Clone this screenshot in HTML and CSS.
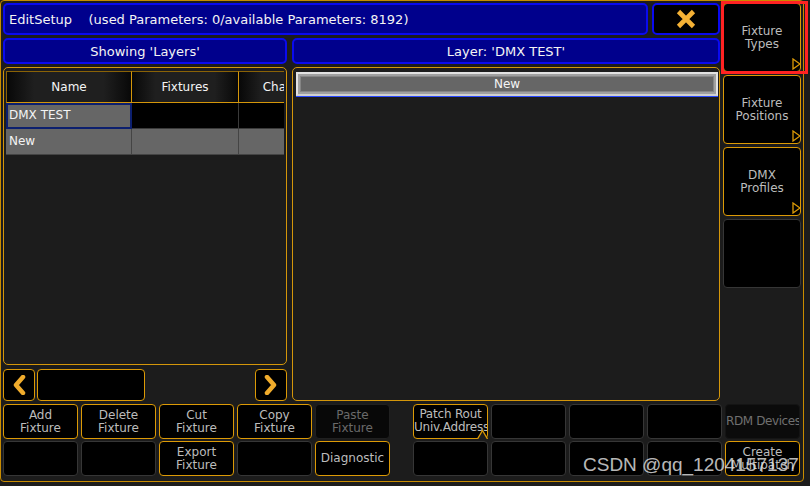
FILE: index.html
```html
<!DOCTYPE html>
<html>
<head>
<meta charset="utf-8">
<title>EditSetup</title>
<link rel="stylesheet" href="styles.css">
</head>
<body>
<div class="app">
  <div class="top">
    <div class="main">
      <div class="titlerow">
        <div class="title">EditSetup    (used Parameters: 0/available Parameters: 8192)</div>
        <div class="close">
          <svg width="22" height="20" viewBox="0 0 22 20"><path d="M3.5 2.5 L18.5 17.5 M18.5 2.5 L3.5 17.5" stroke="#f4b135" stroke-width="4.6" fill="none"/></svg>
        </div>
      </div>
      <div class="subrow">
        <div class="sub sub-left">Showing 'Layers'</div>
        <div class="sub sub-right">Layer: 'DMX TEST'</div>
      </div>
      <div class="panels">
        <div class="leftcol">
          <div class="panel table-panel">
            <div class="table">
              <div class="trow thead">
                <div class="th">Name</div>
                <div class="th">Fixtures</div>
                <div class="th">Channels</div>
              </div>
              <div class="trow">
                <div class="td sel">DMX TEST</div>
                <div class="td black"></div>
                <div class="td black"></div>
              </div>
              <div class="trow">
                <div class="td">New</div>
                <div class="td"></div>
                <div class="td"></div>
              </div>
            </div>
          </div>
          <div class="scrollrow">
            <div class="btn arrow">
              <svg width="14" height="20" viewBox="0 0 14 20"><polyline points="11,2 4,10 11,18" stroke="#f0ac2c" stroke-width="4.5" fill="none" stroke-linejoin="round" stroke-linecap="round"/></svg>
            </div>
            <div class="btn scrollbox"></div>
            <div class="spacer"></div>
            <div class="btn arrow">
              <svg width="14" height="20" viewBox="0 0 14 20"><polyline points="3,2 10,10 3,18" stroke="#f0ac2c" stroke-width="4.5" fill="none" stroke-linejoin="round" stroke-linecap="round"/></svg>
            </div>
          </div>
        </div>
        <div class="panel layer-panel">
          <div class="newbar">New</div>
        </div>
      </div>
    </div>
    <div class="side">
      <div class="btn side-btn">Fixture<br>Types
        <svg class="tri" width="9" height="12" viewBox="0 0 9 12"><polygon points="1,1 8,6 1,11" stroke="#dc9a06" stroke-width="1.3" fill="#000"/></svg>
        <div class="selframe"></div>
      </div>
      <div class="btn side-btn">Fixture<br>Positions
        <svg class="tri" width="9" height="12" viewBox="0 0 9 12"><polygon points="1,1 8,6 1,11" stroke="#dc9a06" stroke-width="1.3" fill="#000"/></svg>
      </div>
      <div class="btn side-btn">DMX<br>Profiles
        <svg class="tri" width="9" height="12" viewBox="0 0 9 12"><polygon points="1,1 8,6 1,11" stroke="#dc9a06" stroke-width="1.3" fill="#000"/></svg>
      </div>
      <div class="btn side-btn dim"></div>
    </div>
  </div>
  <div class="buttons">
    <div class="btn">Add<br>Fixture</div>
    <div class="btn">Delete<br>Fixture</div>
    <div class="btn">Cut<br>Fixture</div>
    <div class="btn">Copy<br>Fixture</div>
    <div class="btn paste">Paste<br>Fixture</div>
    <div class="gapcell"></div>
    <div class="btn patch"><span class="clip">Patch Rout<br>Univ.Address</span>
      <svg class="notch" width="11" height="10" viewBox="0 0 11 10"><polyline points="0.5,10 5.5,1.5 10.5,10" stroke="#dc9a06" stroke-width="1.3" fill="#1c1c1c"/></svg>
    </div>
    <div class="btn dim"></div>
    <div class="btn dim"></div>
    <div class="btn dim"></div>
    <div class="btn rdm"><span class="clip">RDM Devices</span></div>

    <div class="btn dim"></div>
    <div class="btn dim"></div>
    <div class="btn">Export<br>Fixture</div>
    <div class="btn dim"></div>
    <div class="btn">Diagnostic</div>
    <div class="gapcell"></div>
    <div class="btn dim"></div>
    <div class="btn dim"></div>
    <div class="btn dim"></div>
    <div class="btn dim"></div>
    <div class="btn">Create<br>Multipatch</div>
  </div>
</div>
<div class="watermark">CSDN @qq_1204157137</div>
</body>
</html>
```

FILE: styles.css
```css
* { box-sizing: border-box; margin: 0; padding: 0; }

body {
  background: #1c1c1c;
  font-family: "DejaVu Sans", sans-serif;
  font-size: 12px;
  color: #bcbcbc;
  width: 810px;
  height: 486px;
  overflow: hidden;
  position: relative;
}

.app {
  width: 804px;
  height: 482px;
  border: 1px solid #c98c00;
  border-radius: 4px;
  padding: 2px 2px 4px 2px;
  display: flex;
  flex-direction: column;
}

.top { display: flex; gap: 3px; height: 398px; }

.main { width: 717px; display: flex; flex-direction: column; gap: 3px; }

.titlerow { display: flex; gap: 4px; height: 32px; }

.title {
  flex: 1;
  background: #00008c;
  border: 2px solid #0a0af0;
  border-radius: 5px;
  color: #f4f4f4;
  font-size: 13px;
  display: flex;
  align-items: center;
  padding-left: 4px;
  white-space: pre;
}

.close {
  width: 68px;
  background: #000;
  border: 2px solid #0a0af0;
  border-radius: 5px;
  display: flex;
  align-items: center;
  justify-content: center;
}

.subrow { display: flex; gap: 5px; height: 26px; }

.sub {
  background: #00008c;
  border: 2px solid #0a0af0;
  border-radius: 5px;
  color: #f4f4f4;
  font-size: 13px;
  display: flex;
  align-items: center;
  justify-content: center;
}
.sub-left { width: 284px; }
.sub-right { flex: 1; }

.panels { display: flex; gap: 5px; height: 334px; }

.leftcol { width: 284px; display: flex; flex-direction: column; gap: 4px; }

.panel {
  border: 1px solid #d4960a;
  border-radius: 5px;
  background: #1c1c1c;
  overflow: hidden;
}

.table-panel { height: 298px; padding: 3px 2px; }

.table { overflow: hidden; }

.trow { display: grid; grid-template-columns: 126px 107px 104px; }

.th {
  height: 32px;
  background: linear-gradient(to right, #080808, #1f1f1f 22%, #1f1f1f 78%, #080808);
  border-right: 1px solid #d4960a;
  border-top: 1px solid #8a6206;
  border-bottom: 1px solid #d4960a;
  color: #f4f4f4;
  display: flex;
  align-items: center;
  justify-content: center;
}
.th:first-child { border-left: 1px solid #8a6206; }

.td {
  height: 26px;
  background: #666;
  border-right: 1px solid #444;
  border-bottom: 1px solid #444;
  color: #f4f4f4;
  line-height: 24px;
  padding-left: 3px;
  white-space: nowrap;
}
.td.black { background: #000; border-color: #3a3a3a; }
.td.sel { border: 2px solid #0c1f6e; padding-left: 1px; line-height: 21px; }

.scrollrow { display: flex; gap: 2px; height: 32px; }
.arrow { width: 32px; }
.scrollbox { width: 108px; }
.spacer { flex: 1; }

.btn {
  background: #000;
  border: 1px solid #dc9a06;
  border-radius: 4px;
  display: flex;
  align-items: center;
  justify-content: center;
  text-align: center;
  line-height: 13px;
  color: #bcbcbc;
  position: relative;
}
.btn.dim { border-color: #363636; }
.btn.paste { border-color: #202020; background: #080808; color: #6a6a6a; }
.btn.rdm { border-color: #141414; background: #0b0b0b; color: #707070; }

.clip {
  display: block;
  width: 100%;
  overflow: hidden;
  white-space: nowrap;
  text-align: center;
}
.patch .clip { padding-bottom: 1px; letter-spacing: -0.2px; }
.rdm .clip { letter-spacing: -0.4px; }

.notch { position: absolute; left: 63px; bottom: -1px; }

.layer-panel { flex: 1; padding: 4px 1px 0 3px; }

.newbar {
  height: 24px;
  border: 2px solid #e2e2e2;
  border-bottom-color: #d0d0d0;
  box-shadow: inset 0 0 0 2px #a0a0a0, inset 0 0 0 3px #858585, 0 1px 0 #2848ff;
  background: #666;
  color: #f4f4f4;
  display: flex;
  align-items: center;
  justify-content: center;
}

.side { width: 78px; display: flex; flex-direction: column; gap: 3px; }
.side-btn { height: 69px; flex: none; }
.tri { position: absolute; right: -1px; bottom: 1px; }

.selframe {
  position: absolute;
  top: -3px;
  left: -3px;
  right: -8px;
  bottom: -3px;
  border: 3px solid #ff2222;
  pointer-events: none;
}

.buttons {
  display: grid;
  grid-template-columns: repeat(5, 75px) 17px repeat(5, 75px);
  grid-template-rows: 35px 35px;
  column-gap: 3px;
  row-gap: 2px;
  margin-top: 3px;
}

.watermark {
  position: absolute;
  left: 583px;
  top: 454px;
  font-family: "Liberation Sans", Arial, sans-serif;
  font-size: 19px;
  color: rgba(235, 235, 235, 0.8);
  white-space: nowrap;
}
```
